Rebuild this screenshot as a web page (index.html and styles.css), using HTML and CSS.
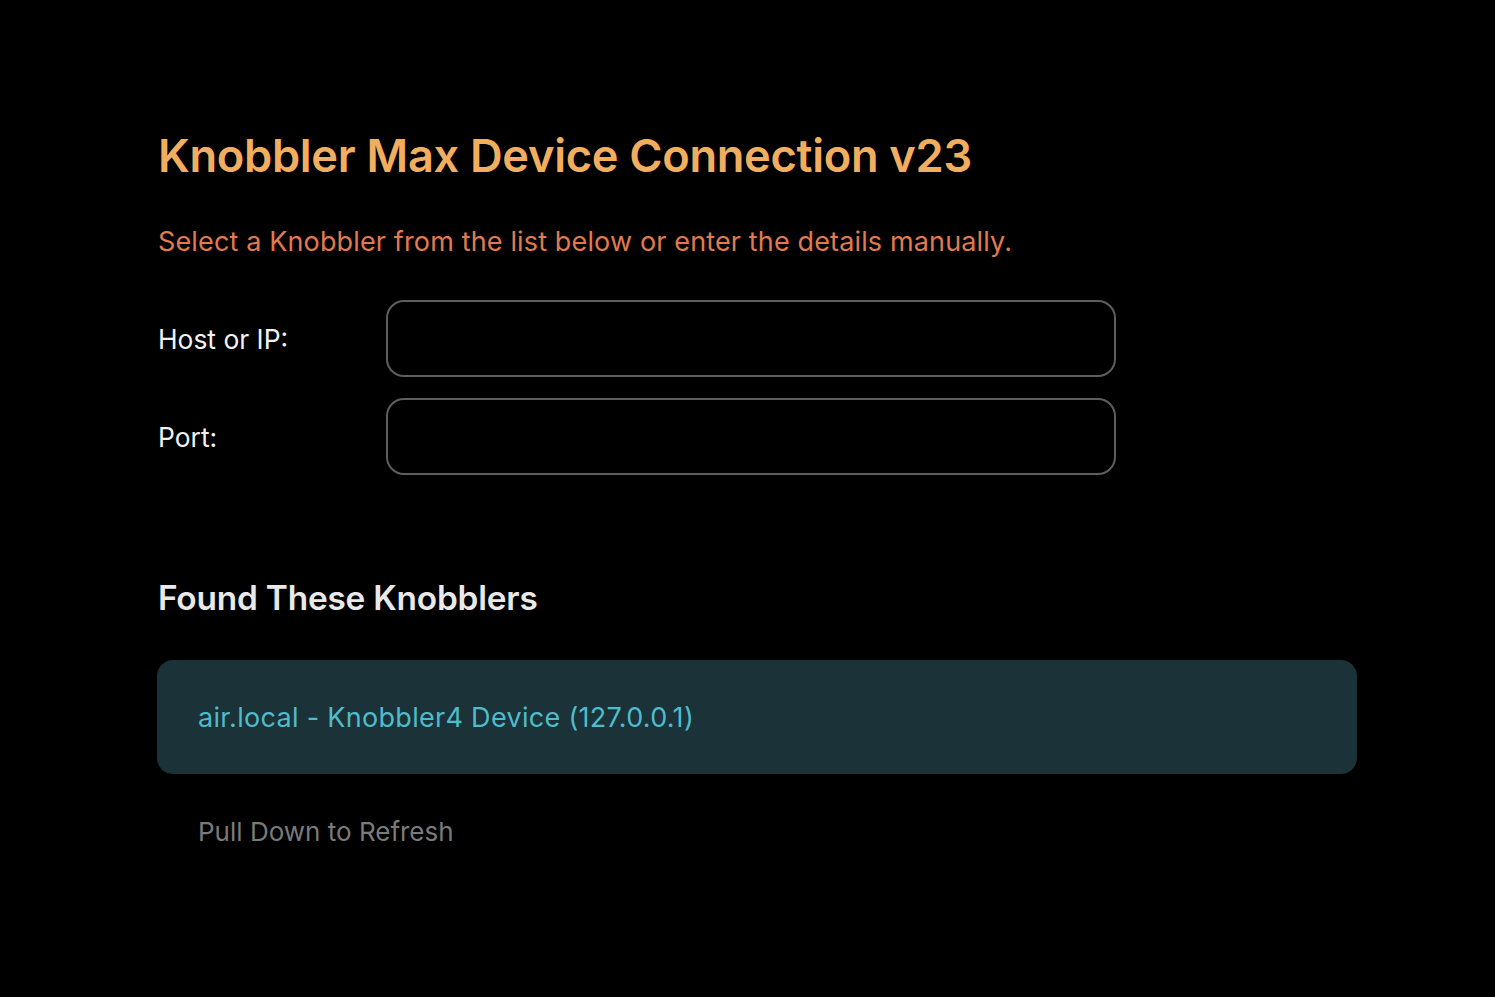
FILE: index.html
```html
<!DOCTYPE html>
<html>
<head>
<meta charset="utf-8">
<link rel="stylesheet" href="styles.css">
</head>
<body>
<main class="page">
  <h1 class="title">Knobbler Max Device Connection v23</h1>
  <p class="subtitle">Select a Knobbler from the list below or enter the details manually.</p>
  <div class="form">
    <label class="label">Host or IP:</label>
    <div class="input"></div>
    <label class="label">Port:</label>
    <div class="input"></div>
  </div>
  <h2 class="section">Found These Knobblers</h2>
  <div class="device">air.local - Knobbler4 Device (127.0.0.1)</div>
  <p class="refresh">Pull Down to Refresh</p>
</main>
</body>
</html>
```

FILE: styles.css
```css
html, body {
  margin: 0;
  padding: 0;
  background: #000;
}
body {
  font-family: Inter, "Noto Sans", sans-serif;
  width: 1495px;
  height: 997px;
  overflow: hidden;
}
.page {
  padding: 128px 0 0 157px;
  width: 1200px;
}
.title {
  margin: 0 0 0 1px;
  font-size: 45.2px;
  line-height: 56px;
  font-weight: 600;
  color: #f2ae5f;
  letter-spacing: -0.3px;
}
.subtitle {
  margin: 43px 0 0 1px;
  font-size: 27px;
  line-height: 30px;
  color: #e07a4f;
  letter-spacing: 0.14px;
}
.form {
  margin-top: 43px;
  display: grid;
  grid-template-columns: 229px 730px;
  grid-auto-rows: 77px;
  row-gap: 21px;
  align-items: center;
}
.label {
  font-size: 26.4px;
  color: #f2f2f2;
  padding-left: 1px;
}
.input {
  height: 77px;
  box-sizing: border-box;
  border: 2px solid #5e5e5e;
  border-radius: 18px;
}
.section {
  margin: 103px 0 0 1px;
  font-size: 33.4px;
  line-height: 40px;
  font-weight: 600;
  color: #e9e9e9;
  letter-spacing: -0.2px;
}
.device {
  margin-top: 42px;
  width: 1200px;
  height: 114px;
  box-sizing: border-box;
  padding-left: 41px;
  display: flex;
  align-items: center;
  background: #1b3238;
  border-radius: 16px;
  font-size: 27px;
  letter-spacing: 0.3px;
  color: #4fbccc;
}
.refresh {
  margin: 42px 0 0 41px;
  font-size: 26px;
  line-height: 32px;
  color: #7a7a7a;
}
```
